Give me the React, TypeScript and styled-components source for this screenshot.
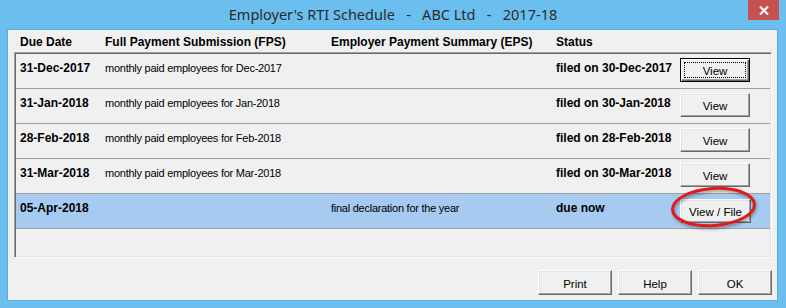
import React from 'react'
import styled, { createGlobalStyle, css } from 'styled-components'

const GlobalStyle = createGlobalStyle`
  html, body {
    margin: 0;
    padding: 0;
    background: #6bbfee;
  }
  body {
    font-family: 'Liberation Sans', Arial, sans-serif;
  }
`

const Window = styled.div`
  width: 786px;
  height: 308px;
  box-sizing: border-box;
  background: #6bbfee;
  display: flex;
  flex-direction: column;
  padding: 0 9px 8px 8px;
`

const TitleBar = styled.div`
  height: 30px;
  display: grid;
  grid-template-columns: 1fr auto 1fr;
  align-items: start;
  margin: 0 -9px 0 -8px;
`

const Title = styled.div`
  grid-column: 2;
  padding-top: 4px;
  font-family: 'Noto Sans', 'Open Sans', sans-serif;
  font-size: 14.5px;
  color: #2b2b2b;
  white-space: pre;
  line-height: 20px;
`

const CloseButton = styled.div`
  grid-column: 3;
  justify-self: end;
  margin-right: 7px;
  width: 31px;
  height: 20px;
  background: #c75050;
  display: flex;
  align-items: center;
  justify-content: center;
`

const Panel = styled.div`
  flex: 1;
  background: #f0f0f0;
  display: flex;
  flex-direction: column;
  padding: 0 5px 5px 6px;
  box-shadow: 0 0 0 1px #5aaedd;
`

const grid = css`
  display: grid;
  grid-template-columns: 85px 226px 225px 124px 70px 1fr;
`

const HeaderRow = styled.div`
  ${grid};
  height: 22px;
  align-items: center;
  padding-left: 6px;
  font-size: 12px;
  font-weight: bold;
  color: #000;
  padding-top: 2px;
  box-sizing: border-box;
`

const ListBox = styled.div`
  height: 206px;
  box-sizing: border-box;
  border: 1px solid;
  border-color: #a0a0a0 #ffffff #ffffff #a0a0a0;
  box-shadow: inset 1px 1px #696969, inset -1px -1px #e3e3e3;
  padding: 1px 1px 0 1px;
  display: flex;
  flex-direction: column;
`

const Row = styled.div<{ $selected?: boolean }>`
  ${grid};
  padding-left: 4px;
  height: 35px;
  box-sizing: border-box;
  border-bottom: 1px solid #a0a0a0;
  background: ${(p) => (p.$selected ? '#a7caf0' : 'transparent')};
  align-items: start;
  color: #000;
`

const DateCell = styled.div`
  font-size: 12px;
  font-weight: bold;
  padding-top: 7px;
  line-height: 14px;
`

const TextCell = styled.div`
  font-size: 11px;
  letter-spacing: -0.25px;
  padding-top: 7px;
  line-height: 14px;
`

const StatusCell = styled(DateCell)``

const ButtonCell = styled.div<{ $offset: number }>`
  position: relative;
  padding-top: ${(p) => p.$offset}px;
`

const Button = styled.button<{ $default?: boolean; $w?: number; $h?: number }>`
  position: relative;
  width: ${(p) => p.$w ?? 70}px;
  height: ${(p) => p.$h ?? 24}px;
  box-sizing: border-box;
  font-family: 'Liberation Sans', Arial, sans-serif;
  font-size: 11.5px;
  color: #000;
  background: #f0f0f0;
  padding: 2px 0 0 0;
  border: 1px solid;
  border-color: #ffffff #696969 #696969 #ffffff;
  box-shadow: inset -1px -1px #a0a0a0, inset 1px 1px #e3e3e3;
  ${(p) =>
    p.$default &&
    css`
      border: 1px solid #000;
      box-shadow: inset 1px 1px #fff, inset -1px -1px #696969,
        inset -2px -2px #a0a0a0;
      &::after {
        content: '';
        position: absolute;
        inset: 3px;
        border: 1px dotted #000;
      }
    `}
`

const Highlight = styled.svg`
  position: absolute;
  left: -11px;
  top: -12px;
  width: 96px;
  height: 46px;
  pointer-events: none;
  filter: drop-shadow(1px 2px 1.5px rgba(0, 0, 0, 0.35));
`

const Spacer = styled.div`
  flex: 1;
`

const Footer = styled.div`
  display: flex;
  justify-content: flex-end;
  gap: 6px;
`

type Entry = {
  due: string
  fps: string
  eps: string
  status: string
  action: string
}

const entries: Entry[] = [
  { due: '31-Dec-2017', fps: 'monthly paid employees for Dec-2017', eps: '', status: 'filed on 30-Dec-2017', action: 'View' },
  { due: '31-Jan-2018', fps: 'monthly paid employees for Jan-2018', eps: '', status: 'filed on 30-Jan-2018', action: 'View' },
  { due: '28-Feb-2018', fps: 'monthly paid employees for Feb-2018', eps: '', status: 'filed on 28-Feb-2018', action: 'View' },
  { due: '31-Mar-2018', fps: 'monthly paid employees for Mar-2018', eps: '', status: 'filed on 30-Mar-2018', action: 'View' },
  { due: '05-Apr-2018', fps: '', eps: 'final declaration for the year', status: 'due now', action: 'View / File' },
]

const App: React.FC = () => {
  return (
    <>
      <GlobalStyle />
      <Window>
        <TitleBar>
          <Title>{"Employer's RTI Schedule   -   ABC Ltd   -   2017-18"}</Title>
          <CloseButton>
            <svg width="10" height="9" viewBox="0 0 10 9">
              <path d="M1 0.5 L9 8.5 M9 0.5 L1 8.5" stroke="#fff" strokeWidth="2" />
            </svg>
          </CloseButton>
        </TitleBar>
        <Panel>
          <HeaderRow>
            <div>Due Date</div>
            <div>Full Payment Submission (FPS)</div>
            <div>Employer Payment Summary (EPS)</div>
            <div>Status</div>
          </HeaderRow>
          <ListBox>
            {entries.map((e, i) => {
              const selected = i === entries.length - 1
              return (
                <Row key={e.due} $selected={selected}>
                  <DateCell>{e.due}</DateCell>
                  <TextCell>{e.fps}</TextCell>
                  <TextCell>{e.eps}</TextCell>
                  <StatusCell>{e.status}</StatusCell>
                  <ButtonCell $offset={selected ? 5 : 4}>
                    <Button $default={i === 0} $w={selected ? 71 : 70}>
                      {e.action}
                    </Button>
                    {selected && (
                      <Highlight viewBox="0 0 96 46">
                        <ellipse
                          cx="44.5"
                          cy="25"
                          rx="41"
                          ry="18.5"
                          fill="none"
                          stroke="#e3191b"
                          strokeWidth="3"
                          transform="rotate(-4 44.5 25)"
                        />
                      </Highlight>
                    )}
                  </ButtonCell>
                </Row>
              )
            })}
          </ListBox>
          <Spacer />
          <Footer>
            <Button $w={74} $h={25}>Print</Button>
            <Button $w={74} $h={25}>Help</Button>
            <Button $w={74} $h={25}>OK</Button>
          </Footer>
        </Panel>
      </Window>
    </>
  )
}

export default App
